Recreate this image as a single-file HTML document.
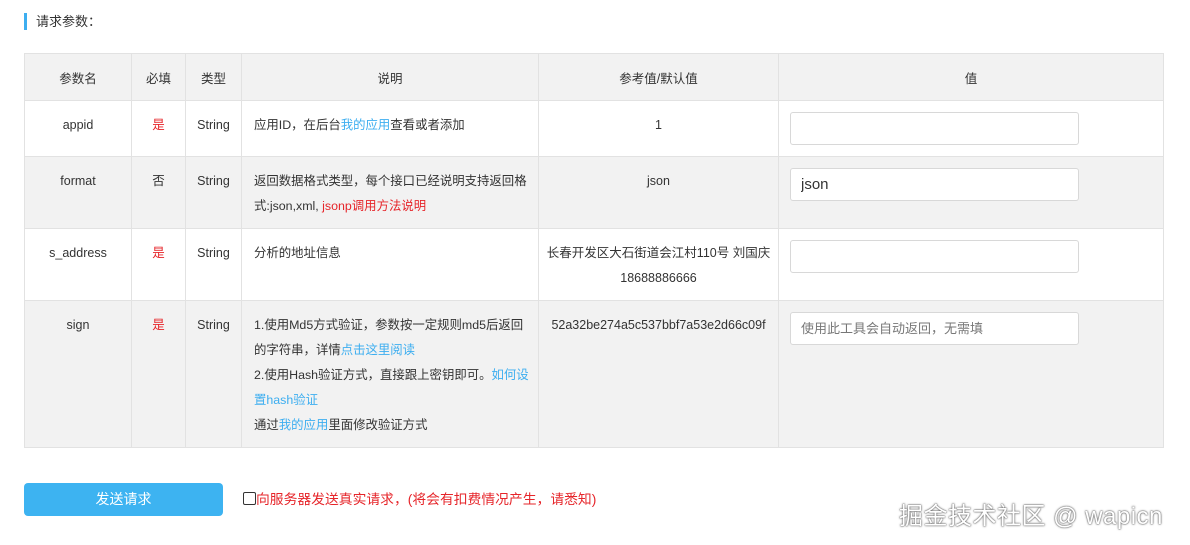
<!DOCTYPE html>
<html><head><meta charset="utf-8"><style>
body{margin:0;background:#fff;font-family:"Liberation Sans","Noto Sans CJK SC",sans-serif;font-size:12.5px;color:#333;width:1190px;height:545px;position:relative;overflow:hidden}
.title{position:absolute;left:24px;top:13px;height:17px;border-left:3px solid #3daef0;padding-left:9px;line-height:18px;font-size:13px}
table{position:absolute;left:24px;top:53px;border-collapse:collapse;width:1140px}
td,th{border:1px solid #e2e2e2;font-weight:normal;text-align:center;vertical-align:top;padding:0}
th{height:46px;vertical-align:middle;background:#f2f2f2}
tr.g td{background:#f2f2f2}
td{padding-top:12px;line-height:25px}
td.l{text-align:left;padding-left:12px;padding-right:4px;font-size:12.4px}
.r{color:#e6252a}.b{color:#3daef0}
input[type=text]{display:block;margin-left:11px;margin-top:-1px;width:289px;height:33px;box-sizing:border-box;border:1px solid #d8d8d8;border-radius:3px;font-size:15px;padding:0 10px;font-family:inherit;color:#333;background:#fff}
input::placeholder{color:#777;font-size:13px}
.btn{position:absolute;left:24px;top:483px;width:199px;height:33px;background:#3db3f1;border-radius:4px;color:#fff;text-align:center;line-height:33px;font-size:14px}
.chk{position:absolute;left:243px;top:488px;color:#e6252a;font-size:13.8px}
.chk span{display:inline-block;width:11px;height:11px;border:1px solid #333;border-radius:2px;vertical-align:-1px}
.wm{position:absolute;left:899px;top:496px;font-size:24px;color:#fff;text-shadow:0 0 2px #555,0 0 1px #333;letter-spacing:0.5px}
</style></head><body>
<div class="title">请求参数：</div>
<table>
<tr><th style="width:106px">参数名</th><th style="width:53px">必填</th><th style="width:55px">类型</th><th style="width:296px">说明</th><th style="width:239px">参考值/默认值</th><th>值</th></tr>
<tr style="height:56px"><td>appid</td><td class="r">是</td><td>String</td><td class="l">应用ID，在后台<span class="b">我的应用</span>查看或者添加</td><td>1</td><td><input type="text"></td></tr>
<tr class="g" style="height:72px"><td>format</td><td>否</td><td>String</td><td class="l">返回数据格式类型，每个接口已经说明支持返回格式:json,xml, <span class="r">jsonp调用方法说明</span></td><td>json</td><td><input type="text" value="json"></td></tr>
<tr style="height:72px"><td>s_address</td><td class="r">是</td><td>String</td><td class="l">分析的地址信息</td><td>长春开发区大石街道会江村110号 刘国庆<br>18688886666</td><td><input type="text"></td></tr>
<tr class="g" style="height:147px"><td>sign</td><td class="r">是</td><td>String</td><td class="l">1.使用Md5方式验证，参数按一定规则md5后返回的字符串，详情<span class="b">点击这里阅读</span><br>2.使用Hash验证方式，直接跟上密钥即可。<span class="b">如何设置hash验证</span><br>通过<span class="b">我的应用</span>里面修改验证方式</td><td>52a32be274a5c537bbf7a53e2d66c09f</td><td><input type="text" placeholder="使用此工具会自动返回，无需填"></td></tr>
</table>
<div class="btn">发送请求</div>
<div class="chk"><span></span>向服务器发送真实请求，(将会有扣费情况产生，请悉知)</div>
<div class="wm">掘金技术社区 @ wapicn</div>
</body></html>
